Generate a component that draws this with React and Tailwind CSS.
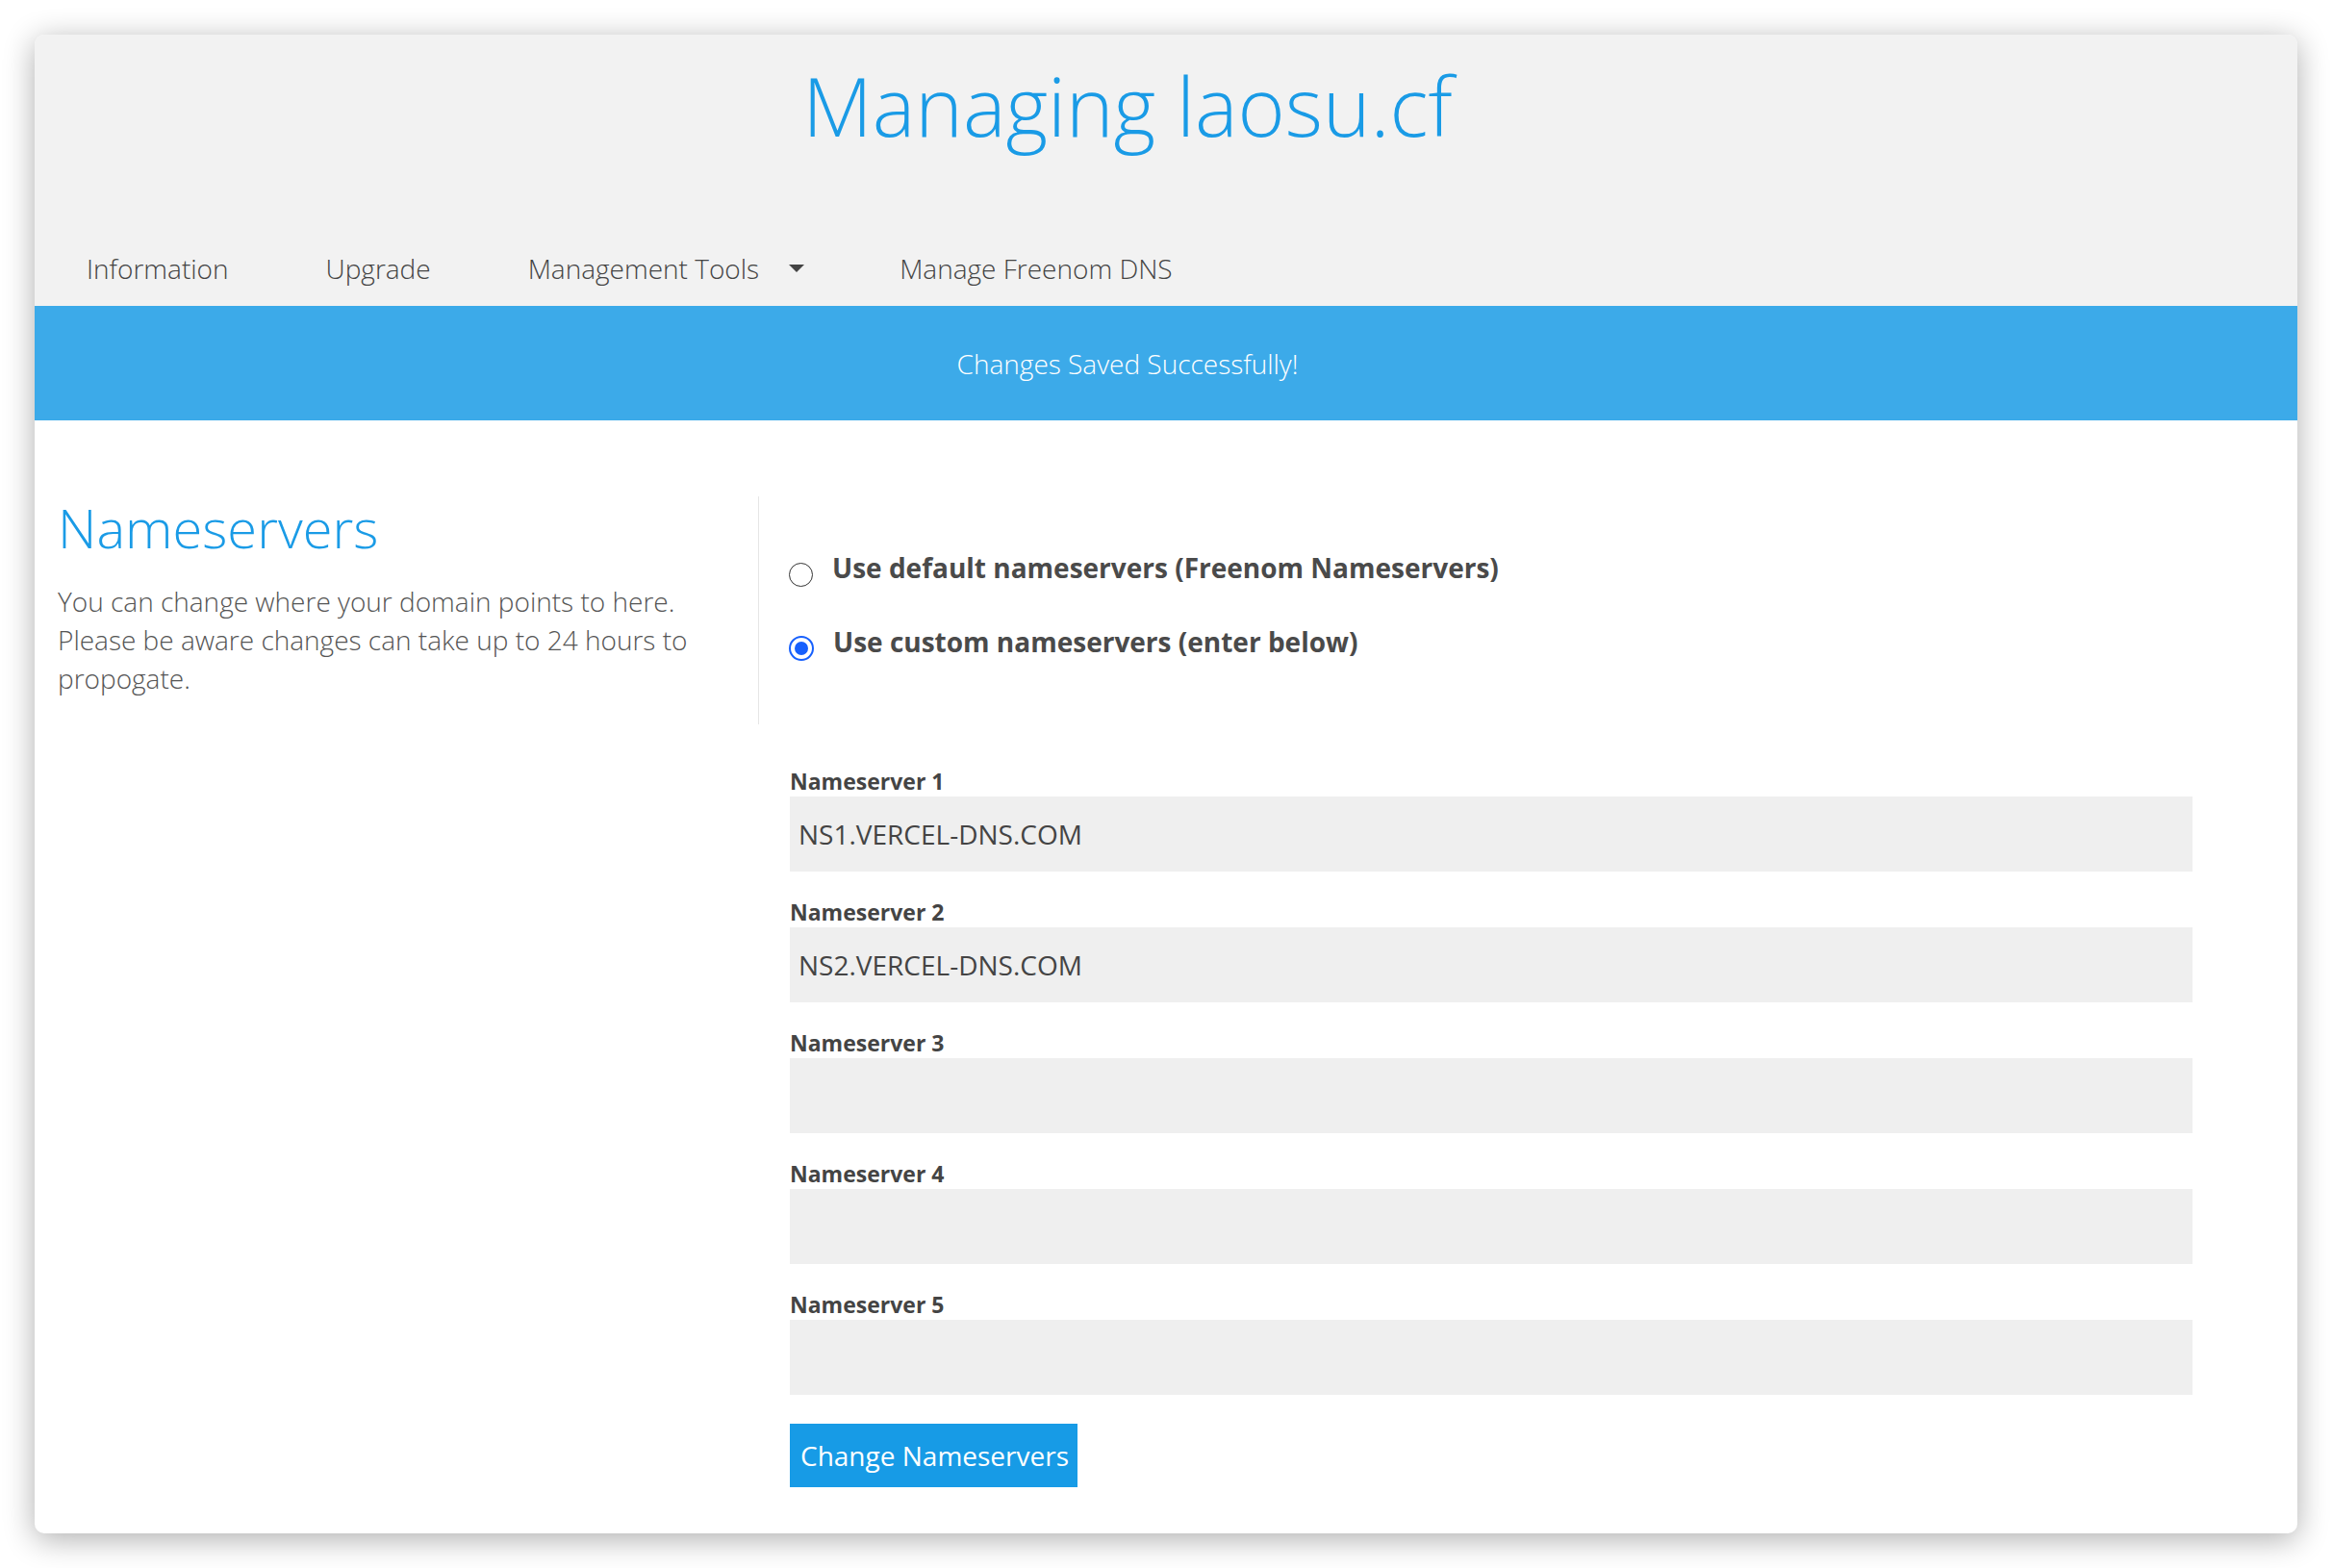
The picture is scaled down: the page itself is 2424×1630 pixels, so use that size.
import { useState } from 'react';

const servers = ['NS1.VERCEL-DNS.COM', 'NS2.VERCEL-DNS.COM', '', '', ''];

function Radio({ checked }) {
  return checked ? (
    <span className="mt-[14px] flex h-[26px] w-[26px] shrink-0 items-center justify-center rounded-full border-[2.5px] border-[#1760fd] bg-white">
      <span className="h-[14px] w-[14px] rounded-full bg-[#1760fd]" />
    </span>
  ) : (
    <span className="mt-[15px] h-[25px] w-[25px] shrink-0 rounded-full border-[1.5px] border-[#333] bg-white" />
  );
}

export default function App() {
  const [mode, setMode] = useState('custom');
  const [values, setValues] = useState(servers);

  return (
    <div className="min-h-screen bg-white p-[36px]" style={{ fontFamily: '"Open Sans", "Noto Sans", sans-serif' }}>
      <div className="overflow-hidden rounded-[10px] bg-white shadow-[0_6px_32px_rgba(0,0,0,0.32)]">
        <header className="bg-[#f2f2f2]">
          <h1 className="pt-[24px] pr-[80px] text-center text-[84px] font-light leading-[100px] text-[#1a9be6]">
            Managing laosu.cf
          </h1>
          <nav className="mt-[99px] flex items-center pb-[19px] pl-[54px] text-[28px] font-light leading-[40px] text-[#444]">
            <a className="mr-[101px]">Information</a>
            <a className="mr-[101px]">Upgrade</a>
            <a className="flex items-center">
              Management Tools
              <svg className="ml-[31px]" width="16" height="8" viewBox="0 0 16 8">
                <path d="M0 0 H16 L8 8 Z" fill="#444" />
              </svg>
            </a>
            <a className="ml-[99px]">Manage Freenom DNS</a>
          </nav>
        </header>

        <div className="flex h-[119px] items-center justify-center bg-[#3caae9] pr-[80px] text-[28px] font-light leading-[40px] text-white">
          Changes Saved Successfully!
        </div>

        <main className="pl-[24px] pt-[79px] pb-[48px]">
          <div className="flex">
            <div className="h-[237px] w-[729px] border-r border-[#e6e6e6]">
              <h2 className="text-[56px] font-light leading-[64px] text-[#1a9be6]">Nameservers</h2>
              <p className="mt-[25px] w-[680px] text-[28px] font-light leading-[40px] text-[#555]">
                You can change where your domain points to here. Please be aware changes can take up to 24 hours to propogate.
              </p>
            </div>
            <div className="pl-[31px] pt-[54px]">
              <label className="flex cursor-pointer gap-[20px]" onClick={() => setMode('default')}>
                <Radio checked={mode === 'default'} />
                <span className="text-[28px] font-bold leading-[40px] text-[#4a4a4a]">
                  Use default nameservers (Freenom Nameservers)
                </span>
              </label>
              <label className="mt-[37px] flex cursor-pointer gap-[20px]" onClick={() => setMode('custom')}>
                <Radio checked={mode === 'custom'} />
                <span className="text-[28px] font-bold leading-[40px] text-[#4a4a4a]">
                  Use custom nameservers (enter below)
                </span>
              </label>
            </div>
          </div>

          <form className="ml-[761px] mt-[45px] w-[1458px]" onSubmit={e => e.preventDefault()}>
            {values.map((v, i) => (
              <div key={i} className={i === 0 ? '' : 'mt-[28px]'}>
                <div className="text-[23px] font-bold leading-[28px] text-[#444]">Nameserver {i + 1}</div>
                <input
                  type="text"
                  value={v}
                  onChange={e => setValues(values.map((x, j) => (j === i ? e.target.value : x)))}
                  className="mt-[2px] block h-[78px] w-full bg-[#efefef] px-[9px] text-[28px] text-[#444] outline-none"
                />
              </div>
            ))}
            <button
              type="submit"
              className="mt-[30px] h-[66px] w-[299px] whitespace-nowrap bg-[#179be6] pl-[11px] text-left text-[28px] leading-[66px] text-white"
            >
              Change Nameservers
            </button>
          </form>
        </main>
      </div>
    </div>
  );
}
